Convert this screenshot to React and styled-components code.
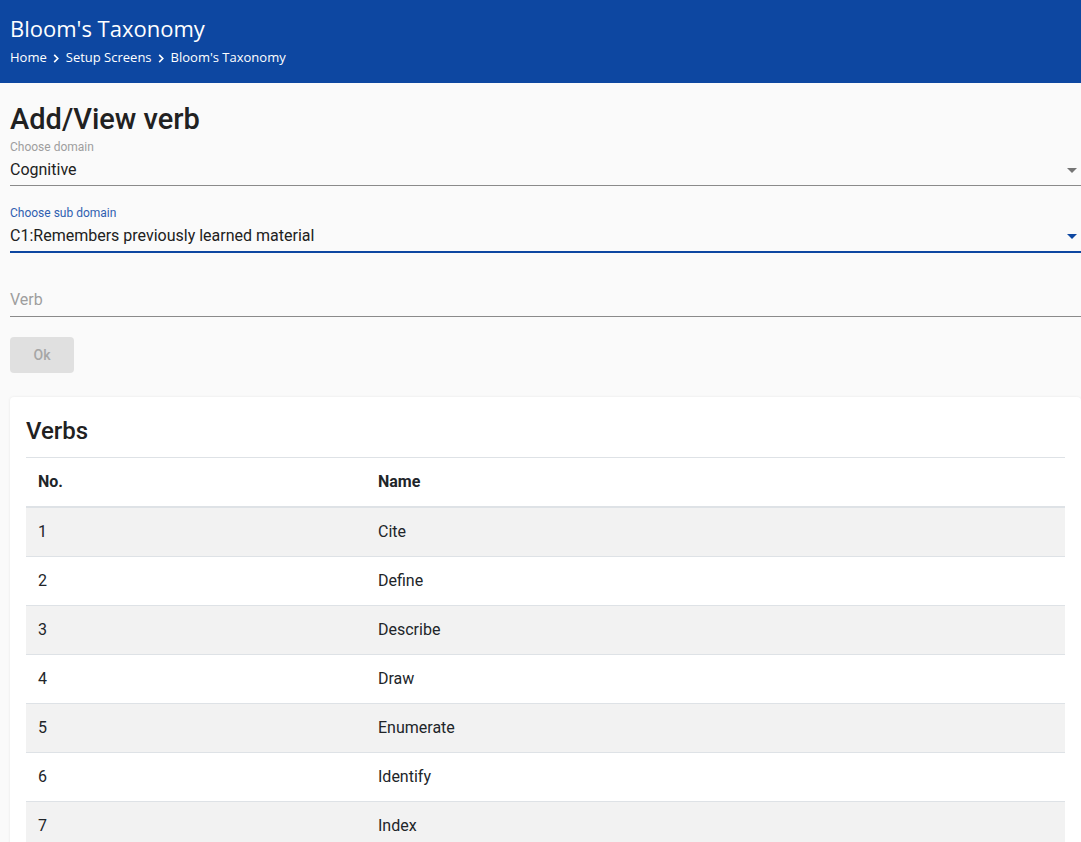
import styled, { createGlobalStyle } from "styled-components";

const verbs = ["Cite", "Define", "Describe", "Draw", "Enumerate", "Identify", "Index"];

function DropArrow({ active }) {
  return (
    <Arrow viewBox="0 0 10 5" $active={active}>
      <path d="M0 0l5 5 5-5z" />
    </Arrow>
  );
}

function App() {
  return (
    <>
      <GlobalStyle />
      <Header>
        <HeaderTitle>Bloom's Taxonomy</HeaderTitle>
        <Crumbs>
          <span>Home</span>
          <Chevron />
          <span>Setup Screens</span>
          <Chevron />
          <span>Bloom's Taxonomy</span>
        </Crumbs>
      </Header>
      <Main>
        <PageTitle>Add/View verb</PageTitle>

        <Field>
          <Label>Choose domain</Label>
          <Value>Cognitive</Value>
          <DropArrow />
        </Field>

        <Field $active $spaced>
          <Label $active>Choose sub domain</Label>
          <Value>C1:Remembers previously learned material</Value>
          <DropArrow active />
        </Field>

        <TextField>
          <Placeholder>Verb</Placeholder>
        </TextField>

        <OkButton disabled>Ok</OkButton>

        <Card>
          <CardTitle>Verbs</CardTitle>
          <Table>
            <thead>
              <tr>
                <Th $first>No.</Th>
                <Th>Name</Th>
              </tr>
            </thead>
            <tbody>
              {verbs.map((v, i) => (
                <Row key={v} $odd={i % 2 === 0}>
                  <Td>{i + 1}</Td>
                  <Td>{v}</Td>
                </Row>
              ))}
            </tbody>
          </Table>
        </Card>
      </Main>
    </>
  );
}
export default App;

function Chevron() {
  return (
    <ChevronSvg viewBox="0 0 6 10">
      <path d="M1 1l4 4-4 4" fill="none" stroke="white" strokeWidth="1.8" />
    </ChevronSvg>
  );
}

const GlobalStyle = createGlobalStyle`
  body {
    margin: 0;
    background: #fafafa;
    font-family: Roboto, "Liberation Sans", sans-serif;
    color: #212529;
    overflow: hidden;
  }
`;

const Header = styled.header`
  height: 83px;
  box-sizing: border-box;
  background: #0d47a1;
  color: white;
  padding: 14px 10px 0;
  font-family: "Open Sans", "Noto Sans", sans-serif;
`;

const HeaderTitle = styled.div`
  font-size: 22px;
  line-height: 28px;
`;

const Crumbs = styled.div`
  display: flex;
  align-items: center;
  gap: 6.5px;
  margin-top: 2px;
  font-size: 13px;
  line-height: 26px;
`;

const ChevronSvg = styled.svg`
  width: 6px;
  height: 9px;
  margin-top: 3px;
`;

const Main = styled.main`
  padding: 19px 0 0 10px;
`;

const PageTitle = styled.h1`
  margin: 0;
  font-size: 29px;
  font-weight: 500;
  line-height: 34px;
  color: #212121;
`;

const Field = styled.div`
  position: relative;
  margin-top: ${(p) => (p.$spaced ? "20px" : "4px")};
  padding-bottom: 3px;
  border-bottom: ${(p) => (p.$active ? "2px solid #0d47a1" : "1px solid #8a8a8a")};
`;

const Label = styled.div`
  font-size: 12px;
  line-height: 14px;
  color: ${(p) => (p.$active ? "#3060b0" : "#9e9e9e")};
`;

const Value = styled.div`
  font-size: 16px;
  line-height: 24px;
  margin-top: 4px;
  color: #212121;
`;

const Arrow = styled.svg`
  position: absolute;
  right: 4px;
  bottom: 12px;
  width: 10px;
  height: 5px;
  fill: ${(p) => (p.$active ? "#0d47a1" : "#757575")};
`;

const TextField = styled.div`
  margin-top: 35px;
  padding-bottom: 4px;
  border-bottom: 1px solid #8a8a8a;
`;

const Placeholder = styled.div`
  font-size: 16px;
  line-height: 24px;
  color: #9e9e9e;
`;

const OkButton = styled.button`
  display: block;
  margin-top: 20px;
  width: 64px;
  height: 36px;
  border: none;
  border-radius: 4px;
  background: #e0e0e0;
  color: #a6a6a6;
  font-family: Roboto, sans-serif;
  font-size: 14px;
  font-weight: 500;
`;

const Card = styled.section`
  margin-top: 24px;
  background: white;
  border-radius: 4px;
  box-shadow: 0 0 3px rgba(0, 0, 0, 0.08);
  padding: 20px 16px 16px;
`;

const CardTitle = styled.h2`
  margin: 0 0 12px;
  font-size: 24px;
  font-weight: 500;
  line-height: 28px;
  color: #212121;
`;

const Table = styled.table`
  width: 100%;
  border-collapse: collapse;
  font-size: 16px;
`;

const Th = styled.th`
  text-align: left;
  font-weight: 700;
  padding: 12px;
  line-height: 24px;
  width: ${(p) => (p.$first ? "316px" : "auto")};
  border-top: 1px solid #dee2e6;
  border-bottom: 2px solid #dee2e6;
`;

const Row = styled.tr`
  background: ${(p) => (p.$odd ? "#f2f2f2" : "white")};
`;

const Td = styled.td`
  padding: 12px;
  line-height: 24px;
  border-top: 1px solid #dee2e6;
`;
